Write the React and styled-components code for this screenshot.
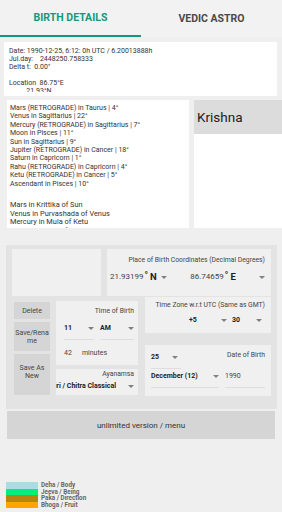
import React from "react";
import styled, { createGlobalStyle, css } from "styled-components";

const teal = "#15977f";

const GlobalStyle = createGlobalStyle`
  body {
    margin: 0;
    background: #efefef;
    font-family: Roboto, "Liberation Sans", sans-serif;
  }
`;

const Screen = styled.div`
  width: 282px;
  height: 512px;
  overflow: hidden;
  display: flex;
  flex-direction: column;
  background: #efefef;
`;

const TabBar = styled.div`
  display: grid;
  grid-template-columns: 141px 141px;
  height: 37px;
  background: #f2f2f2;
`;

const Tab = styled.div`
  display: flex;
  align-items: center;
  justify-content: center;
  box-sizing: border-box;
  font-size: 10.5px;
  font-weight: 700;
  color: #4a4a4a;
  ${(props) =>
    props.active &&
    css`
      color: ${teal};
      border-bottom: 2px solid ${teal};
    `}
`;

const InfoBox = styled.div`
  margin: 5px 5px 0 4px;
  height: 54px;
  box-sizing: border-box;
  padding: 5px 5px 4px;
  background: #fff;
`;

const InfoScroll = styled.div`
  height: 100%;
  overflow: hidden;
  font-size: 7px;
  line-height: 8px;
  color: #333;
  white-space: pre;
`;

const TopRow = styled.div`
  display: flex;
  gap: 5px;
  margin-top: 4px;
  height: 128px;
`;

const PlanetBox = styled.div`
  margin-left: 7px;
  width: 182px;
  box-sizing: border-box;
  padding: 4px 3px 0;
  background: #fff;
  overflow: hidden;
  color: #333;
`;

const PlanetList = styled.div`
  font-size: 7px;
  line-height: 8.4px;
`;

const NakshatraList = styled.div`
  margin-top: 13px;
  font-size: 7.4px;
  line-height: 8.7px;
`;

const NameColumn = styled.div`
  flex: 1;
  display: flex;
  flex-direction: column;
`;

const NameHeader = styled.div`
  height: 34px;
  display: flex;
  align-items: center;
  padding-left: 3px;
  background: #dcdcdc;
  font-size: 13.5px;
  color: #222;
`;

const NameBody = styled.div`
  flex: 1;
  background: #fff;
`;

const Panel = styled.div`
  margin: 17px 5px 0 6px;
  padding: 4px 6px 13px;
  background: #e3e3e3;
`;

const PanelTop = styled.div`
  display: grid;
  grid-template-columns: 89px 1fr;
  gap: 6px;
  height: 47px;
`;

const Card = styled.div`
  background: #f0f0f0;
  box-sizing: border-box;
  overflow: hidden;
  height: ${(props) => props.h || "auto"};
  padding: ${(props) => props.pad || "0"};
`;

const Label = styled.div`
  font-size: 6.8px;
  line-height: 9px;
  color: #444;
  text-align: ${(props) => props.align || "right"};
  white-space: nowrap;
`;

const CoordRow = styled.div`
  display: flex;
  align-items: center;
  margin-top: 6px;
  padding-left: 3px;
`;

const Select = styled.div`
  display: flex;
  align-items: center;
  width: ${(props) => props.w}px;
  margin-right: ${(props) => props.mr || 0}px;
  line-height: 12px;
  white-space: nowrap;
  ${(props) =>
    props.line &&
    css`
      padding-bottom: 5px;
      border-bottom: 1px solid #dedede;
    `}
`;

const Value = styled.span`
  font-size: ${(props) => props.size || 7}px;
  font-weight: ${(props) => (props.bold ? 700 : 400)};
  color: ${(props) => (props.bold ? "#222" : "#444")};
`;

const Degree = styled.span`
  font-size: 9px;
  font-weight: 700;
  color: #222;
  position: relative;
  top: -2px;
  margin-left: 1px;
`;

const Hemi = styled.span`
  font-size: 9.5px;
  font-weight: 700;
  color: #222;
  margin-left: 2px;
`;

const Arrow = styled.span`
  margin-left: auto;
  margin-right: ${(props) => props.mr || 0}px;
  width: 0;
  height: 0;
  border-left: 3px solid transparent;
  border-right: 3px solid transparent;
  border-top: 3.5px solid #808080;
`;

const PanelBottom = styled.div`
  display: flex;
  align-items: flex-start;
  margin-top: 1px;
`;

const ButtonColumn = styled.div`
  display: flex;
  flex-direction: column;
  gap: 3px;
  width: 36px;
  margin: 5px 0 0 2px;
`;

const SideButton = styled.div`
  height: ${(props) => props.h}px;
  box-sizing: border-box;
  display: flex;
  align-items: center;
  justify-content: center;
  padding: 0 1px ${(props) => props.shift || 0}px;
  background: #d5d5d5;
  font-size: 7px;
  line-height: 8px;
  color: #444;
  text-align: center;
  overflow-wrap: anywhere;
`;

const MidColumn = styled.div`
  display: flex;
  flex-direction: column;
  gap: 4px;
  width: 82px;
  margin: 4px 0 0 6px;
`;

const RightColumn = styled.div`
  display: flex;
  flex-direction: column;
  gap: 12px;
  width: 126px;
  margin-left: 7px;
`;

const SelectRow = styled.div`
  display: flex;
  align-items: flex-start;
  justify-content: ${(props) => props.justify || "flex-start"};
  margin-top: ${(props) => props.mt || 0}px;
`;

const Minutes = styled.div`
  display: flex;
  gap: 10px;
  margin-top: 7px;
  line-height: 12px;
`;

const ClipSelect = styled.div`
  display: flex;
  align-items: center;
  margin-top: 1px;
  line-height: 12px;
`;

const ClipText = styled.div`
  flex: 1;
  overflow: hidden;
  display: flex;
  justify-content: flex-end;
  white-space: nowrap;
  margin-right: 12px;
`;

const MenuButton = styled.div`
  margin: 2px 7px 0;
  height: 28px;
  display: flex;
  align-items: center;
  justify-content: center;
  background: #d5d5d5;
  font-size: 8px;
  color: #333;
`;

const Legend = styled.div`
  margin: auto 0 4px 6px;
  display: grid;
  grid-template-columns: 32px auto;
  column-gap: 3px;
  grid-auto-rows: 6.5px;
`;

const Swatch = styled.div`
  background: ${(props) => props.color};
`;

const LegendText = styled.div`
  font-size: 6.3px;
  line-height: 6.5px;
  font-weight: 700;
  color: #666;
  white-space: nowrap;
`;

const planets = [
  "Mars (RETROGRADE) in Taurus | 4°",
  "Venus in Sagittarius | 22°",
  "Mercury (RETROGRADE) in Sagittarius | 7°",
  "Moon in Pisces | 11°",
  "Sun in Sagittarius | 9°",
  "Jupiter (RETROGRADE) in Cancer | 18°",
  "Saturn in Capricorn | 1°",
  "Rahu (RETROGRADE) in Capricorn | 4°",
  "Ketu (RETROGRADE) in Cancer | 5°",
  "Ascendant in Pisces | 10°",
];

const nakshatras = [
  "Mars in Krittika of Sun",
  "Venus in Purvashada of Venus",
  "Mercury in Mula of Ketu",
  "Moon in Revati of Mercury",
];

const legend = [
  ["#a9dde2", "Deha / Body"],
  ["#00f07a", "Jeeva / Being"],
  ["#b8860b", "Paka / Direction"],
  ["#ffa500", "Bhoga / Fruit"],
];

export default function App() {
  return (
    <Screen>
      <GlobalStyle />
      <TabBar>
        <Tab active>BIRTH DETAILS</Tab>
        <Tab>VEDIC ASTRO</Tab>
      </TabBar>

      <InfoBox>
        <InfoScroll>
          {"Date: 1990-12-25, 6:12: 0h UTC / 6.20013888h\n" +
            "Jul.day:    2448250.758333\n" +
            "Delta t:  0.00\"\n" +
            "\n" +
            "Location  86.75°E\n" +
            "          21.93°N"}
        </InfoScroll>
      </InfoBox>

      <TopRow>
        <PlanetBox>
          <PlanetList>
            {planets.map((p) => (
              <div key={p}>{p}</div>
            ))}
          </PlanetList>
          <NakshatraList>
            {nakshatras.map((n) => (
              <div key={n}>{n}</div>
            ))}
          </NakshatraList>
        </PlanetBox>
        <NameColumn>
          <NameHeader>Krishna</NameHeader>
          <NameBody />
        </NameColumn>
      </TopRow>

      <Panel>
        <PanelTop>
          <Card />
          <Card pad="7px 6px 0 0">
            <Label>Place of Birth Coordinates (Decimal Degrees)</Label>
            <CoordRow>
              <Select w={59} mr={23}>
                <Value size={8}>21.93199</Value>
                <Degree>°</Degree>
                <Hemi>N</Hemi>
                <Arrow />
              </Select>
              <Select w={77}>
                <Value size={8}>86.74659</Value>
                <Degree>°</Degree>
                <Hemi>E</Hemi>
                <Arrow />
              </Select>
            </CoordRow>
          </Card>
        </PanelTop>

        <PanelBottom>
          <ButtonColumn>
            <SideButton h={17}>Delete</SideButton>
            <SideButton h={29}>Save/Rename</SideButton>
            <SideButton h={41} shift={5}>
              Save As New
            </SideButton>
          </ButtonColumn>

          <MidColumn>
            <Card h="64px" pad="6px 4px 0 8px">
              <Label>Time of Birth</Label>
              <SelectRow mt={6}>
                <Select w={30} mr={6} line>
                  <Value bold>11</Value>
                  <Arrow />
                </Select>
                <Select w={34} line>
                  <Value bold>AM</Value>
                  <Arrow />
                </Select>
              </SelectRow>
              <Minutes>
                <Value>42</Value>
                <Value>minutes</Value>
              </Minutes>
            </Card>
            <Card h="26px" pad="1px 4px 0 0">
              <Label>Ayanamsa</Label>
              <ClipSelect>
                <ClipText>
                  <Value bold>Lahiri / Chitra Classical</Value>
                </ClipText>
                <Arrow />
              </ClipSelect>
            </Card>
          </MidColumn>

          <RightColumn>
            <Card h="36px" pad="4px 6px 0 0">
              <Label>Time Zone w.r.t UTC (Same as GMT)</Label>
              <SelectRow justify="flex-end" mt={4}>
                <Select w={38} mr={5}>
                  <Value bold>+5</Value>
                  <Arrow />
                </Select>
                <Select w={30} mr={3}>
                  <Value bold>30</Value>
                  <Arrow />
                </Select>
              </SelectRow>
            </Card>
            <Card h="51px" pad="6px 6px 0 6px">
              <SelectRow justify="space-between">
                <Select w={30} line>
                  <Value bold>25</Value>
                  <Arrow mr={3} />
                </Select>
                <Label>Date of Birth</Label>
              </SelectRow>
              <SelectRow mt={1}>
                <Select w={68} mr={6} line>
                  <Value bold>December (12)</Value>
                  <Arrow />
                </Select>
                <Select w={40} line>
                  <Value>1990</Value>
                </Select>
              </SelectRow>
            </Card>
          </RightColumn>
        </PanelBottom>
      </Panel>

      <MenuButton>unlimited version / menu</MenuButton>

      <Legend>
        {legend.map(([color, text]) => (
          <React.Fragment key={text}>
            <Swatch color={color} />
            <LegendText>{text}</LegendText>
          </React.Fragment>
        ))}
      </Legend>
    </Screen>
  );
}
